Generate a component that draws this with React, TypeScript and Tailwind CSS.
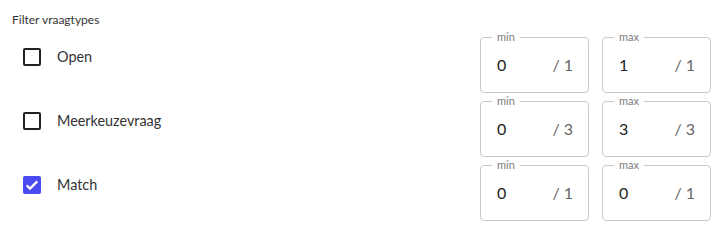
const rows = [
  { label: 'Open', checked: false, min: 0, max: 1, total: 1 },
  { label: 'Meerkeuzevraag', checked: false, min: 0, max: 3, total: 3 },
  { label: 'Match', checked: true, min: 0, max: 0, total: 1 },
]

const CountField = ({ legend, value, total }: { legend: string; value: number; total: number }) => (
  <div className="relative flex h-[56px] w-[109px] items-center justify-between rounded-[4px] border border-[#c8c8c8] pl-4 pr-[15px]">
    <span className="absolute -top-[8px] left-[11px] bg-white px-[5px] text-[11px] leading-[14px] text-[#7a7a7a]">
      {legend}
    </span>
    <span className="text-[16px] text-[#222]">{value}</span>
    <span className="text-[16px] text-[#666]">/ {total}</span>
  </div>
)

const Checkbox = ({ checked }: { checked: boolean }) =>
  checked ? (
    <span className="flex size-[18px] items-center justify-center rounded-[2px] bg-[#4a4af0]">
      <svg viewBox="0 0 24 24" className="size-4" fill="none" stroke="white" strokeWidth={3.4}>
        <path d="M4 12.5l5 5L20 6.5" />
      </svg>
    </span>
  ) : (
    <span className="size-[18px] rounded-[2px] border-2 border-[#222]" />
  )

export default function App() {
  return (
    <div className="w-[722px] bg-white pt-3 font-['Lato','Liberation_Sans',sans-serif]">
      <p className="pl-3 text-[12px] leading-4 text-[#333]">Filter vraagtypes</p>

      <div className="mt-1">
        {rows.map((row) => (
          <div key={row.label} className="flex h-16 items-start justify-between pr-[11px]">
            <label className="flex items-center gap-4 pl-[23px] pt-4">
              <Checkbox checked={row.checked} />
              <span className="text-[14.4px] leading-[18px] text-[#333]">{row.label}</span>
            </label>
            <div className="mt-[5px] flex gap-[13px]">
              <CountField legend="min" value={row.min} total={row.total} />
              <CountField legend="max" value={row.max} total={row.total} />
            </div>
          </div>
        ))}
      </div>
    </div>
  )
}
